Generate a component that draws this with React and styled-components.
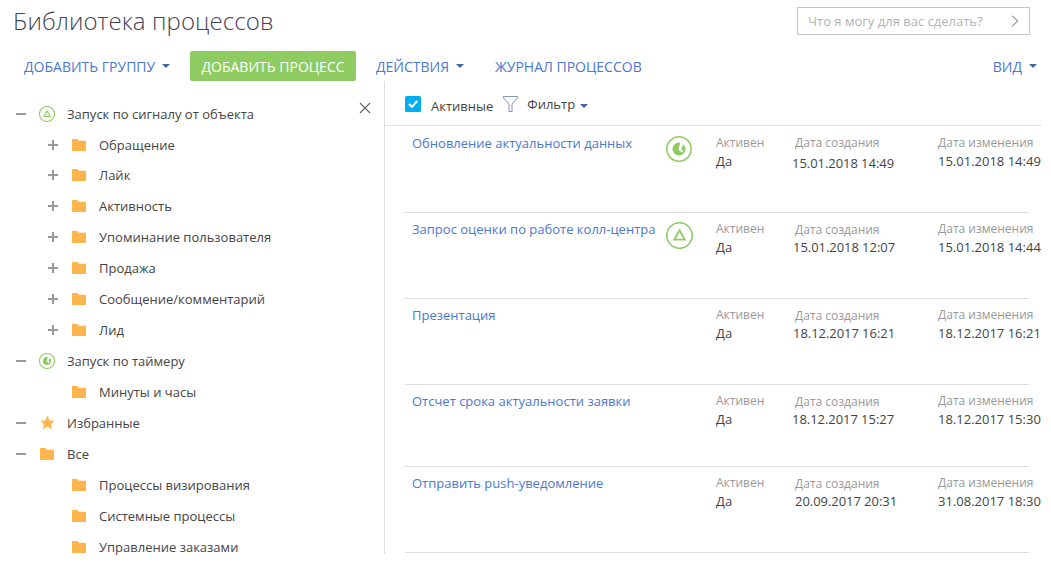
import React from "react";
import styled, { createGlobalStyle } from "styled-components";

const Global = createGlobalStyle`
  * { box-sizing: border-box; }
  body { margin: 0; background: #fff; font-family: "Open Sans", "Noto Sans", sans-serif; font-size: 13px; color: #444; overflow: hidden; }
  svg { display: block; flex: none; }
`;

const Page = styled.div`width: 1051px; height: 564px; overflow: hidden;`;

const Header = styled.header`
  display: flex; justify-content: space-between; align-items: flex-start;
  height: 51px; padding: 0 21px 0 13px;
`;
const Title = styled.h1`
  margin: 4px 0 0; font-size: 24px; line-height: 33px; font-weight: 300; color: #444453;
  white-space: nowrap; letter-spacing: 0.1px;
`;
const Search = styled.div`
  display: flex; align-items: center; justify-content: space-between;
  width: 233px; height: 28px; margin-top: 7px; padding: 0 10px;
  border: 1px solid #c4c4c4; color: #b3b3b3; white-space: nowrap;
`;

const Toolbar = styled.nav`display: flex; align-items: center; height: 30px; padding: 0 14px 0 24px;`;
const MenuItem = styled.div`
  display: flex; align-items: center; gap: 7px; width: ${(p) => p.$w}px; padding-top: 2px;
  font-size: 14px; line-height: 30px; color: #4b78d0; white-space: nowrap;
`;
const Primary = styled.button`
  width: 166px; height: 30px; margin-right: 20px; padding: 2px 0 0 0; border: 0; border-radius: 2px;
  background: #8ecb60; color: #fff; font: 14px/28px "Open Sans", sans-serif; white-space: nowrap;
`;
const Spacer = styled.div`flex: 1;`;
const Caret = styled.i`
  border: 4px solid transparent; border-top-color: #4366a4; border-bottom: 0; margin-top: ${(p) => p.$mt || -3}px;
`;

const Body = styled.div`display: flex; height: 473px;`;
const Side = styled.aside`
  display: flex; justify-content: space-between; align-items: flex-start;
  width: 385px; height: 473px; border-right: 1px solid #dedede; padding: 17px 13px 0 15px;
`;
const Close = styled.span`margin-top: 4px;`;
const TreeRow = styled.div`
  display: flex; align-items: center; height: ${(p) => (p.$tight ? 30 : 31)}px;
  padding: ${(p) => (p.$tight ? 1 : 0)}px 0 0 ${(p) => p.$level * 32}px; white-space: nowrap;
`;
const Toggle = styled.span`width: 12px; display: flex;`;
const TreeIcon = styled.span`width: 40px; display: flex; justify-content: center;`;

const Main = styled.main`width: 657px; flex: none;`;
const FilterBar = styled.div`
  display: flex; align-items: flex-start; height: 45px; padding: 15px 0 0 20px; border-bottom: 1px solid #dedede;
`;
const FilterText = styled.span`
  font-size: 13px; line-height: 18px; margin: ${(p) => p.$m}; white-space: nowrap;
`;
const FilterIcon = styled.span`margin: 0 0 0 10px; display: flex;`;

const Row = styled.div`
  display: grid; grid-template-columns: 254px 50px 79px 143px 106px;
  height: ${(p) => p.$h}px; width: 624px; margin-left: 20px; padding: ${(p) => p.$pt}px 0 0 7px;
  border-bottom: 1px solid #dedede; line-height: 18px; white-space: nowrap;
`;
const Link = styled.a`color: #4b78d0;`;
const Kind = styled.span`padding-top: 2px;`;
const Label = styled.div`font-size: 12px; color: #999; line-height: 18px; padding-top: ${(p) => p.$drop || 0}px;`;
const Value = styled.div`
  line-height: 18px; letter-spacing: ${(p) => p.$ls || 0}px; margin: ${(p) => p.$mt || 0}px 0 0 ${(p) => p.$ml || 0}px;
`;

const Folder = () => (
  <svg width="14" height="12" viewBox="0 0 14 12"><path d="M0 0H5.2L7 1.8H14V12H0Z" fill="#ffb54d" /></svg>
);
const Star = () => (
  <svg width="16" height="15" viewBox="0 0 16 15"><path d="M8.5 0.5L10.6 5.4L15.8 5.8L11.8 9.2L13.1 14.4L8.5 11.6L3.9 14.4L5.2 9.2L1.2 5.8L6.4 5.4Z" fill="#ffb54d" /></svg>
);
const Signal = ({ size = 16 }) => (
  <svg width={size} height={size} viewBox="0 0 26 26" fill="none" stroke="#8ecb60">
    <circle cx="13" cy="13" r="12.2" strokeWidth={size > 20 ? 1.5 : 1.7} />
    <path d="M13 8L18 17H8Z" strokeWidth="1.8" />
  </svg>
);
const Timer = ({ size = 16 }) => (
  <svg width={size} height={size} viewBox="0 0 26 26">
    <circle cx="13" cy="13" r="12.2" fill="none" stroke="#8ecb60" strokeWidth={size > 20 ? 1.5 : 1.7} />
    <circle cx="13" cy="13" r="6.5" fill="#8ecb60" />
    <path d="M14.6 6L18 7.5L15.2 12.6L17.2 15.6L15.8 16.6L12.2 13.4Z" fill="#fff" />
  </svg>
);
const Sign = ({ plus }) => (
  <svg width="11" height="11" viewBox="0 0 11 11" fill="#999">
    <rect x="1" y="5" width="10" height="2" />
    {plus && <rect x="5" y="1" width="2" height="10" />}
  </svg>
);

const tree = [
  ["Запуск по сигналу от объекта", 0, "-", Signal],
  ["Обращение", 1, "+", Folder, true],
  ["Лайк", 1, "+", Folder],
  ["Активность", 1, "+", Folder],
  ["Упоминание пользователя", 1, "+", Folder],
  ["Продажа", 1, "+", Folder],
  ["Сообщение/комментарий", 1, "+", Folder],
  ["Лид", 1, "+", Folder],
  ["Запуск по таймеру", 0, "-", Timer],
  ["Минуты и часы", 1, "", Folder],
  ["Избранные", 0, "-", Star],
  ["Все", 0, "-", Folder],
  ["Процессы визирования", 1, "", Folder],
  ["Системные процессы", 1, "", Folder],
  ["Управление заказами", 1, "", Folder],
];

const rows = [
  { name: "Обновление актуальности данных", kind: Timer, size: 26, made: "15.01.2018 14:49", edit: "15.01.2018 14:49", h: 87, pt: 8, ml: -3, mt: 2, drop: 0 },
  { name: "Запрос оценки по работе колл-центра", kind: Signal, size: 27, made: "15.01.2018 12:07", edit: "15.01.2018 14:44", h: 86, pt: 7, ml: -2, mt: -1, drop: 1 },
  { name: "Презентация", made: "18.12.2017 16:21", edit: "18.12.2017 16:21", h: 86, pt: 7, ml: -2, mt: -1, drop: 1 },
  { name: "Отсчет срока актуальности заявки", made: "18.12.2017 15:27", edit: "18.12.2017 15:30", h: 82, pt: 7, ml: -3, mt: -1, drop: 1 },
  { name: "Отправить push-уведомление", made: "20.09.2017 20:31", edit: "31.08.2017 18:30", h: 86, pt: 7, ml: 0, mt: -1, drop: 1 },
];

export default function App() {
  return (
    <Page>
      <Global />
      <Header>
        <Title>Библиотека процессов</Title>
        <Search>
          Что я могу для вас сделать?
          <svg width="8" height="12" viewBox="0 0 8 12" fill="none" stroke="#666"><path d="M1 .8L6.8 6L1 11.2" /></svg>
        </Search>
      </Header>
      <Toolbar>
        <MenuItem $w={166}>ДОБАВИТЬ ГРУППУ <Caret /></MenuItem>
        <Primary>ДОБАВИТЬ ПРОЦЕСС</Primary>
        <MenuItem $w={119}>ДЕЙСТВИЯ <Caret /></MenuItem>
        <MenuItem $w={150}>ЖУРНАЛ ПРОЦЕССОВ</MenuItem>
        <Spacer />
        <MenuItem>ВИД <Caret /></MenuItem>
      </Toolbar>
      <Body>
        <Side>
          <div>
            {tree.map(([text, level, sign, Icon, tight]) => (
              <TreeRow key={text} $level={level} $tight={tight}>
                <Toggle>{sign && <Sign plus={sign === "+"} />}</Toggle>
                <TreeIcon><Icon /></TreeIcon>
                {text}
              </TreeRow>
            ))}
          </div>
          <Close>
            <svg width="12" height="12" viewBox="0 0 12 12" stroke="#666" strokeWidth="1.2"><path d="M1 1L11 11M11 1L1 11" /></svg>
          </Close>
        </Side>
        <Main>
          <FilterBar>
            <svg width="16" height="16" viewBox="0 0 16 16">
              <rect width="16" height="16" rx="1.5" fill="#00aeef" />
              <path d="M4 8L7 10.8L12.2 5" fill="none" stroke="#fff" strokeWidth="2" />
            </svg>
            <FilterText $m="1px 0 0 10px">Активные</FilterText>
            <FilterIcon>
              <svg width="16" height="17" viewBox="0 0 16 17" fill="none" stroke="#8393b5">
                <path d="M.5 .5H14.5V2L9 8V15.5H6V8L.5 2Z" />
              </svg>
            </FilterIcon>
            <FilterText $m="-1px 5px 0 8px">Фильтр</FilterText>
            <Caret $mt={8} />
          </FilterBar>
          {rows.map((r) => (
            <Row key={r.name} $h={r.h} $pt={r.pt}>
              <Link>{r.name}</Link>
              <Kind>{r.kind && <r.kind size={r.size} />}</Kind>
              <div><Label>Активен</Label><Value>Да</Value></div>
              <div><Label $drop={r.drop}>Дата создания</Label><Value $ml={r.ml} $mt={r.mt} $ls={-0.05}>{r.made}</Value></div>
              <div><Label>Дата изменения</Label><Value>{r.edit}</Value></div>
            </Row>
          ))}
        </Main>
      </Body>
    </Page>
  );
}
